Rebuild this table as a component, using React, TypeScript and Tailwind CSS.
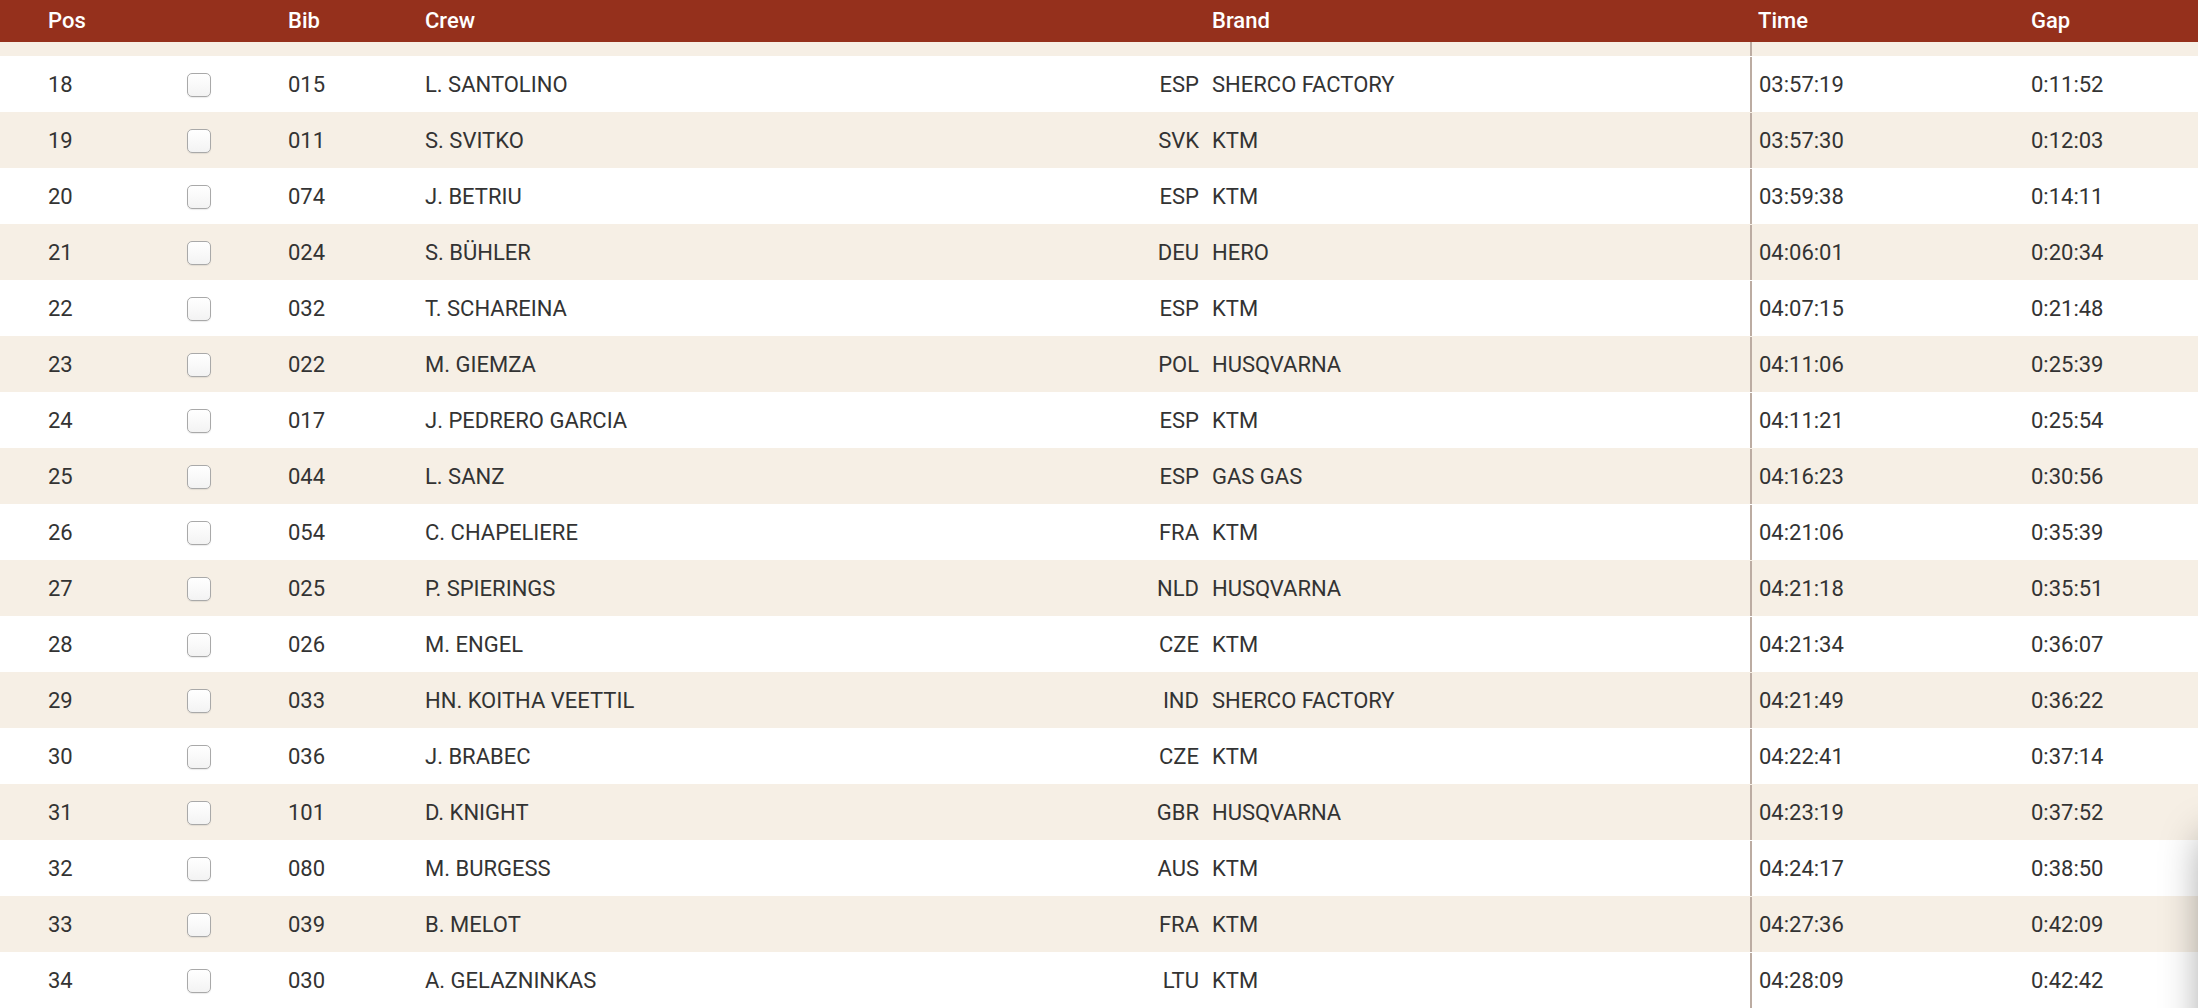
const rows = [
  ['18', '015', 'L. SANTOLINO', 'ESP', 'SHERCO FACTORY', '03:57:19', '0:11:52'],
  ['19', '011', 'S. SVITKO', 'SVK', 'KTM', '03:57:30', '0:12:03'],
  ['20', '074', 'J. BETRIU', 'ESP', 'KTM', '03:59:38', '0:14:11'],
  ['21', '024', 'S. BÜHLER', 'DEU', 'HERO', '04:06:01', '0:20:34'],
  ['22', '032', 'T. SCHAREINA', 'ESP', 'KTM', '04:07:15', '0:21:48'],
  ['23', '022', 'M. GIEMZA', 'POL', 'HUSQVARNA', '04:11:06', '0:25:39'],
  ['24', '017', 'J. PEDRERO GARCIA', 'ESP', 'KTM', '04:11:21', '0:25:54'],
  ['25', '044', 'L. SANZ', 'ESP', 'GAS GAS', '04:16:23', '0:30:56'],
  ['26', '054', 'C. CHAPELIERE', 'FRA', 'KTM', '04:21:06', '0:35:39'],
  ['27', '025', 'P. SPIERINGS', 'NLD', 'HUSQVARNA', '04:21:18', '0:35:51'],
  ['28', '026', 'M. ENGEL', 'CZE', 'KTM', '04:21:34', '0:36:07'],
  ['29', '033', 'HN. KOITHA VEETTIL', 'IND', 'SHERCO FACTORY', '04:21:49', '0:36:22'],
  ['30', '036', 'J. BRABEC', 'CZE', 'KTM', '04:22:41', '0:37:14'],
  ['31', '101', 'D. KNIGHT', 'GBR', 'HUSQVARNA', '04:23:19', '0:37:52'],
  ['32', '080', 'M. BURGESS', 'AUS', 'KTM', '04:24:17', '0:38:50'],
  ['33', '039', 'B. MELOT', 'FRA', 'KTM', '04:27:36', '0:42:09'],
  ['34', '030', 'A. GELAZNINKAS', 'LTU', 'KTM', '04:28:09', '0:42:42'],
];

function Checkbox() {
  return (
    <span className="block h-[24px] w-[24px] rounded-[5px] border-[1.5px] border-[#a9a9a9] bg-gradient-to-b from-white to-[#f3f3f3] shadow-[0_1px_1px_rgba(0,0,0,0.08)]" />
  );
}

export default function App() {
  return (
    <div
      className="relative h-[1008px] w-[2198px] overflow-hidden bg-white text-[22px] text-[#333333]"
      style={{ fontFamily: 'Roboto, "Liberation Sans", sans-serif' }}
    >
      {/* header */}
      <div className="flex h-[42px] items-center bg-[#95301c] pb-[2px] font-medium text-white">
        <div className="w-[187px] pl-[48px]">Pos</div>
        <div className="w-[101px]" />
        <div className="w-[137px]">Bib</div>
        <div className="w-[714px]">Crew</div>
        <div className="w-[60px]" />
        <div className="w-[551px] pl-[13px]">Brand</div>
        <div className="w-[281px] pl-[8px]">Time</div>
        <div className="flex-1">Gap</div>
      </div>

      {/* spacer strip */}
      <div className="flex h-[14px] bg-[#f6efe5]">
        <div className="w-[1750px]" />
        <div className="flex-1 border-l-2 border-[#bcaca2]" />
      </div>

      {rows.map((r, i) => (
        <div key={r[0]} className={`flex h-[56px] items-center pt-[1px] ${i % 2 === 1 ? 'bg-[#f6efe5]' : 'bg-white'}`}>
          <div className="w-[187px] pl-[48px]">{r[0]}</div>
          <div className="w-[101px]">
            <Checkbox />
          </div>
          <div className="w-[137px]">{r[1]}</div>
          <div className="w-[714px]">{r[2]}</div>
          <div className="w-[60px] text-right">{r[3]}</div>
          <div className="w-[551px] pl-[13px]">{r[4]}</div>
          <div className="-mt-[1px] flex h-full w-[281px] items-center border-l-2 border-[#bcaca2] pl-[7px] pt-[1px]">{r[5]}</div>
          <div className="flex-1">{r[6]}</div>
        </div>
      ))}

      {/* floating panel edge, just off screen */}
      <div className="absolute left-[2202px] top-[836px] h-[260px] w-[200px] rounded-[6px] bg-white shadow-[0_0_40px_rgba(0,0,0,0.38)]" />
    </div>
  );
}
